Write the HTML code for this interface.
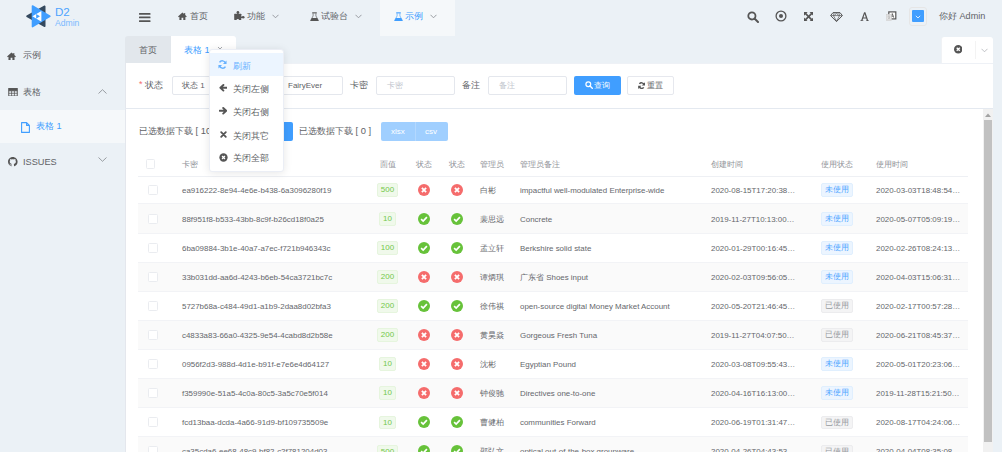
<!DOCTYPE html>
<html><head><meta charset="utf-8">
<style>
*{margin:0;padding:0;box-sizing:border-box;}
html,body{width:1002px;height:452px;overflow:hidden;background:#ebf1f6;font-family:"Liberation Sans",sans-serif;color:#606266;}
.a{position:absolute;}
.t{position:absolute;white-space:nowrap;line-height:1;}
svg{position:absolute;display:block;}
.sn{font-size:9.2px;color:#606266;}
.fl{font-size:9.2px;color:#606266;}
.inp{height:18.5px;border:1px solid #e4e7ed;border-radius:2px;background:#fff;}
.th{font-size:8px;color:#909399;line-height:26px;height:26px;white-space:nowrap;}
.td{font-size:7.93px;color:#65676c;line-height:29px;height:29px;white-space:nowrap;}
.cb{width:9.5px;height:9.5px;border:1px solid #eaecf0;border-radius:1.5px;background:#fff;}
.tag{height:13.5px;line-height:11.5px;font-size:8px;border:1px solid;border-radius:2px;text-align:center;white-space:nowrap;}
.tg{color:#73c84a;background:#f0f9eb;border-color:#e6f5de;}
.tp{width:32px;color:#4da4ff;background:#ecf5ff;border-color:#e0effe;}
.ti{width:32px;color:#96999e;background:#f4f4f5;border-color:#ececee;}
.dm{font-size:9.4px;color:#606266;}
.hn{font-size:9.3px;color:#606266;}
</style></head><body>
<div id="root" class="a" style="left:0;top:0;width:1002px;height:452px;">

<!-- LOGO -->
<svg style="left:22px;top:2px;" width="32" height="30" viewBox="0 0 32 30">
  <polygon points="5,14.3 22.7,4.3 22.7,24.3" fill="#34495e" stroke="#34495e" stroke-width="1.6" stroke-linejoin="round"/>
  <polygon points="10.5,4 27.8,14.3 10.5,24.6" fill="#409eff" stroke="#409eff" stroke-width="1.6" stroke-linejoin="round"/>
  <polygon points="10.4,14.3 19.4,8.9 19.4,19.7" fill="#fff"/>
  <polygon points="14.2,11.9 18,14.3 14.2,16.7" fill="#409eff"/>
</svg>
<div class="t" style="left:55px;top:6.3px;font-size:11.6px;color:#4da4ff;">D2</div>
<div class="t" style="left:55px;top:18.8px;font-size:8.6px;color:#7ab9ff;">Admin</div>

<!-- HEADER LEFT -->
<svg style="left:139.2px;top:13px;" width="11.5" height="9" viewBox="0 0 11.5 9"><rect x="0" y="0" width="11.5" height="1.7" rx="0.5" fill="#555"/><rect x="0" y="3.6" width="11.5" height="1.7" rx="0.5" fill="#555"/><rect x="0" y="7.2" width="11.5" height="1.7" rx="0.5" fill="#555"/></svg>

<!-- home icon -->
<svg style="left:178px;top:12.2px;" width="8.8" height="8" viewBox="0 0 10 9"><path d="M5 0.5 L0 5 L1 5.8 L1.6 5.3 V9 H4 V6.5 H6 V9 H8.4 V5.3 L9 5.8 L10 5 L8.2 3.4 V1 H7 V2.3 Z" fill="#555"/></svg>
<div class="t hn" style="left:189.5px;top:12px;">首页</div>

<!-- puzzle icon -->
<svg style="left:233px;top:10px;" width="13" height="11" viewBox="0 0 13 11"><rect x="1.2" y="3.8" width="7.1" height="6.2" rx="0.4" fill="#555"/><circle cx="4.9" cy="2.3" r="1.3" fill="#555"/><rect x="4.2" y="2.4" width="1.4" height="1.6" fill="#555"/><circle cx="10.2" cy="7.3" r="1.3" fill="#555"/><rect x="8" y="6.6" width="1.6" height="1.4" fill="#555"/><circle cx="4.8" cy="10.3" r="1.3" fill="#ebf1f6"/></svg>
<div class="t hn" style="left:246.7px;top:12px;">功能</div>
<svg style="left:272px;top:14px;" width="7" height="5" viewBox="0 0 7 5"><path d="M0.5 0.8 L3.5 3.8 L6.5 0.8" stroke="#909399" stroke-width="0.9" fill="none"/></svg>

<!-- flask -->
<svg style="left:310px;top:11.8px;" width="9" height="9.5" viewBox="0 0 9 9.5"><path d="M2.2 0.3h4.6v1.1H2.2z" fill="#555"/><path d="M3.1 1.3V3.9L0.7 8.6 M5.9 1.3V3.9L8.3 8.6" stroke="#555" stroke-width="0.65" fill="none"/><path d="M1.8 6.1H7.2L8.6 8.6Q8.8 9.3 8.1 9.3H0.9Q0.2 9.3 0.4 8.6z" fill="#555"/></svg>
<div class="t hn" style="left:321px;top:12px;">试验台</div>
<svg style="left:355px;top:14px;" width="7" height="5" viewBox="0 0 7 5"><path d="M0.5 0.8 L3.5 3.8 L6.5 0.8" stroke="#909399" stroke-width="0.9" fill="none"/></svg>

<div class="a" style="left:380px;top:0;width:75px;height:36px;background:#f5f8fa;"></div>
<svg style="left:394px;top:11.8px;" width="9" height="9.5" viewBox="0 0 9 9.5"><path d="M2.2 0.3h4.6v1.1H2.2z" fill="#409eff"/><path d="M3.1 1.3V3.9L0.7 8.6 M5.9 1.3V3.9L8.3 8.6" stroke="#409eff" stroke-width="0.65" fill="none"/><path d="M1.8 6.1H7.2L8.6 8.6Q8.8 9.3 8.1 9.3H0.9Q0.2 9.3 0.4 8.6z" fill="#409eff"/></svg>
<div class="t hn" style="left:404.5px;top:12px;color:#409eff;">示例</div>
<svg style="left:430px;top:14px;" width="7" height="5" viewBox="0 0 7 5"><path d="M0.5 0.8 L3.5 3.8 L6.5 0.8" stroke="#909399" stroke-width="0.9" fill="none"/></svg>

<!-- HEADER RIGHT -->
<svg style="left:747px;top:11px;" width="12" height="12" viewBox="0 0 12 12"><circle cx="4.9" cy="4.9" r="3.6" stroke="#555" stroke-width="1.8" fill="none"/><path d="M7.5 7.5 L11 11" stroke="#555" stroke-width="2" stroke-linecap="round"/></svg>
<svg style="left:775px;top:10px;" width="12" height="12" viewBox="0 0 12 12"><circle cx="6" cy="6" r="4.9" stroke="#555" stroke-width="1.3" fill="none"/><circle cx="6" cy="6" r="2" fill="#555"/></svg>
<svg style="left:804.2px;top:12px;" width="9.2" height="9.2" viewBox="0 0 10 10"><path d="M0 0h4L0 4z M10 0v4L6 0z M0 10v-4L4 10z M10 10h-4L10 6z" fill="#555"/><path d="M1.5 1.5L8.5 8.5 M8.5 1.5L1.5 8.5" stroke="#555" stroke-width="1.8"/></svg>
<svg style="left:830px;top:11.8px;" width="13" height="10" viewBox="0 0 13 10"><path d="M3 0.6h7l2.4 3L6.5 9.6L0.6 3.6z" stroke="#555" stroke-width="1" fill="none" stroke-linejoin="round"/><path d="M0.8 3.6h11.4 M4.2 0.8L3.4 3.6L6.5 9.2L9.6 3.6L8.8 0.8 M6.5 0.8L4.5 3.6 M6.5 0.8L8.5 3.6" stroke="#555" stroke-width="0.7" fill="none"/></svg>
<svg style="left:860px;top:11.8px;" width="9.4" height="9.6" viewBox="0 0 9.4 9.6"><path d="M4.1 0.3h1.3L8.2 8.4h1v1H6v-1h0.8L6.2 6.6H3.1L2.5 8.4h0.9v1H0.2v-1h0.9z M3.5 5.4h2.3L4.65 1.9z" fill="#555" fill-rule="evenodd"/></svg>
<svg style="left:886px;top:11px;" width="11" height="11" viewBox="0 0 11 11"><rect x="2.8" y="0.9" width="7" height="7" fill="#fff" stroke="#555" stroke-width="1.2"/><path d="M4.9 6.6L6.3 2.6L7.7 6.6M5.4 5.2H7.2" stroke="#555" stroke-width="0.9" fill="none"/><rect x="0.4" y="3.4" width="5" height="6.2" fill="#e6e6e6" stroke="#cfcfcf" stroke-width="0.6"/><path d="M1.6 5.2h2.6M2.9 4.6v0.6M1.8 8.6L4 6M2 6.2L4.2 8.6" stroke="#aaa" stroke-width="0.6" fill="none"/></svg>
<div class="a" style="left:909px;top:7px;width:18px;height:19px;border:1px solid #e6e6e6;border-radius:3px;"></div>
<div class="a" style="left:912px;top:10px;width:11.5px;height:12px;background:#409eff;border-radius:1px;"></div>
<svg style="left:915px;top:14.5px;" width="6" height="4" viewBox="0 0 6 4"><path d="M0.8 0.8L3 3L5.2 0.8" stroke="#fff" stroke-width="0.8" fill="none"/></svg>
<div class="t hn" style="left:939px;top:12.3px;font-size:9.1px;">你好 Admin</div>

<!-- SIDEBAR -->
<svg style="left:7px;top:52px;" width="9" height="8" viewBox="0 0 10 9"><path d="M5 0.5 L0 5 L1 5.8 L1.6 5.3 V9 H4 V6.5 H6 V9 H8.4 V5.3 L9 5.8 L10 5 L8.2 3.4 V1 H7 V2.3 Z" fill="#555"/></svg>
<div class="t sn" style="left:23px;top:51px;">示例</div>
<svg style="left:8px;top:87.6px;" width="10" height="8.5" viewBox="0 0 10 9"><rect x="0.5" y="0.5" width="9" height="8" fill="none" stroke="#555" stroke-width="1"/><path d="M0.5 3h9 M0.5 5.6h9 M3.5 3v5.5 M6.5 3v5.5" stroke="#555" stroke-width="0.8"/><rect x="0.5" y="0.5" width="9" height="2.5" fill="#555"/></svg>
<div class="t sn" style="left:23px;top:87.5px;">表格</div>
<svg style="left:98px;top:89px;" width="9" height="5" viewBox="0 0 9 5"><path d="M0.5 4.5 L4.5 0.7 L8.5 4.5" stroke="#909399" stroke-width="0.9" fill="none"/></svg>
<div class="a" style="left:0;top:109.6px;width:125px;height:33.6px;background:#f5f8fa;"></div>
<svg style="left:21px;top:121.5px;" width="9" height="11" viewBox="0 0 9 11"><path d="M0.6 0.6h5l2.8 2.8v7H0.6z M5.6 0.6v2.8h2.8" stroke="#409eff" stroke-width="1.1" fill="none" stroke-linejoin="round"/></svg>
<div class="t sn" style="left:36px;top:122px;color:#409eff;">表格 1</div>
<svg style="left:8px;top:157.3px;" width="9.6" height="9.6" viewBox="0 0 16 16"><path fill="#555" d="M8 0C3.58 0 0 3.58 0 8c0 3.54 2.29 6.53 5.47 7.59.4.07.55-.17.55-.38 0-.19-.01-.82-.01-1.49-2.01.37-2.53-.49-2.69-.94-.09-.23-.48-.94-.82-1.13-.28-.15-.68-.52-.01-.53.63-.01 1.08.58 1.23.82.72 1.21 1.87.87 2.33.66.07-.52.28-.87.51-1.07-1.78-.2-3.64-.89-3.64-3.95 0-.87.31-1.59.82-2.15-.08-.2-.36-1.02.08-2.12 0 0 .67-.21 2.2.82.64-.18 1.32-.27 2-.27.68 0 1.36.09 2 .27 1.53-1.04 2.2-.82 2.2-.82.44 1.1.16 1.92.08 2.12.51.56.82 1.27.82 2.15 0 3.07-1.87 3.75-3.65 3.95.29.25.54.73.54 1.48 0 1.07-.01 1.93-.01 2.2 0 .21.15.46.55.38A8.013 8.013 0 0016 8c0-4.42-3.58-8-8-8z"/></svg>
<div class="t sn" style="left:23px;top:158px;">ISSUES</div>
<svg style="left:98px;top:157px;" width="9" height="5" viewBox="0 0 9 5"><path d="M0.5 0.5 L4.5 4.3 L8.5 0.5" stroke="#909399" stroke-width="0.9" fill="none"/></svg>

<!-- TABS -->
<div class="a" style="left:125px;top:36px;width:111px;height:27px;border-radius:3px 3px 0 0;overflow:hidden;">
  <div class="a" style="left:0;top:0;width:46px;height:27px;background:#e2e7ec;"></div>
  <div class="a" style="left:46px;top:0;width:65px;height:27px;background:#fff;"></div>
</div>
<div class="t" style="left:139px;top:45px;font-size:9.4px;color:#606266;">首页</div>
<div class="t" style="left:184px;top:45px;font-size:9.4px;color:#409eff;">表格 1</div>
<svg style="left:217px;top:45.5px;" width="6" height="6" viewBox="0 0 6 6"><path d="M1 1L5 5M5 1L1 5" stroke="#909399" stroke-width="0.8"/></svg>

<div class="a" style="left:941px;top:37px;width:52px;height:26px;background:#fff;border-radius:3px 3px 0 0;border-left:1px solid #f0f2f5;"></div>
<svg style="left:953.5px;top:45.2px;" width="8.5" height="8.5" viewBox="0 0 10 10"><circle cx="5" cy="5" r="5" fill="#555"/><path d="M3.2 3.2L6.8 6.8M6.8 3.2L3.2 6.8" stroke="#fff" stroke-width="1.6"/></svg>
<div class="a" style="left:975px;top:41px;width:1px;height:18px;background:#f3f3f3;"></div>
<svg style="left:981px;top:48px;" width="7" height="5" viewBox="0 0 7 5"><path d="M0.5 0.8 L3.5 3.8 L6.5 0.8" stroke="#b0b3b8" stroke-width="0.8" fill="none"/></svg>

<!-- CARD -->
<div class="a" style="left:125px;top:63px;width:868px;height:389px;background:#fff;border-left:1px solid #e4e7ed;"></div>
<div class="a" style="left:125px;top:108px;width:868px;height:1px;background:#e4e9f0;"></div>
<div class="a" style="left:236px;top:62.5px;width:757px;height:1px;background:#eef1f6;"></div>

<!-- FORM -->
<div class="t" style="left:139px;top:80px;font-size:9px;color:#f56c6c;">*</div>
<div class="t fl" style="left:145px;top:81px;">状态</div>
<div class="a inp" style="left:172px;top:76px;width:72px;"></div>
<div class="t" style="left:182px;top:82px;font-size:8px;color:#606266;">状态 1</div>
<div class="t fl" style="left:249px;top:81px;">用户</div>
<div class="a inp" style="left:275px;top:76px;width:67.5px;"></div>
<div class="t" style="left:288px;top:82px;font-size:8px;color:#606266;">FairyEver</div>
<div class="t fl" style="left:350px;top:81px;">卡密</div>
<div class="a inp" style="left:376px;top:76px;width:79px;"></div>
<div class="t" style="left:387px;top:82px;font-size:8px;color:#c0c4cc;">卡密</div>
<div class="t fl" style="left:462px;top:81px;">备注</div>
<div class="a inp" style="left:488px;top:76px;width:79px;"></div>
<div class="t" style="left:499px;top:82px;font-size:8px;color:#c0c4cc;">备注</div>
<div class="a" style="left:574px;top:76px;width:47px;height:18.5px;background:#409eff;border-radius:2px;"></div>
<svg style="left:585px;top:81px;" width="8" height="8" viewBox="0 0 8 8"><circle cx="3.3" cy="3.3" r="2.4" stroke="#fff" stroke-width="1.2" fill="none"/><path d="M5 5L7.3 7.3" stroke="#fff" stroke-width="1.4" stroke-linecap="round"/></svg>
<div class="t" style="left:594px;top:81.5px;font-size:8px;color:#fff;">查询</div>
<div class="a" style="left:627px;top:76px;width:47px;height:18.5px;background:#fff;border:1px solid #e6e8ee;border-radius:2px;"></div>
<svg style="left:637.8px;top:81.8px;" width="7.2" height="7.2" viewBox="0 0 8 8"><path d="M6.7 2.9A2.9 2.9 0 0 0 1.6 2.1 M1.3 5.1A2.9 2.9 0 0 0 6.4 5.9" stroke="#555" stroke-width="1.6" fill="none"/><path d="M7.8 0.3V3.9H4.2z M0.2 7.7V4.1H3.8z" fill="#555"/></svg>
<div class="t" style="left:647px;top:81.5px;font-size:8px;color:#606266;">重置</div>

<!-- TOOLBAR -->
<div class="t" style="left:139px;top:127.3px;font-size:9.35px;color:#606266;">已选数据下载 [ 10 ]</div>
<div class="a" style="left:226px;top:122px;width:67px;height:18.5px;background:#409eff;border-radius:2px;"></div>
<div class="t" style="left:299px;top:127.3px;font-size:9.35px;color:#606266;">已选数据下载 [ 0 ]</div>
<div class="a" style="left:381px;top:122px;width:67px;height:18.5px;background:#a0cfff;border-radius:2px;"></div>
<div class="a" style="left:414.5px;top:122px;width:1px;height:18.5px;background:#b3d8ff;"></div>
<div class="t" style="left:391px;top:128px;font-size:8px;color:#fff;">xlsx</div>
<div class="t" style="left:425px;top:128px;font-size:8px;color:#fff;">csv</div>

<!-- TABLE -->
<div class="a cb" style="left:145.5px;top:159px;"></div>
<div class="a th" style="left:182px;top:151.5px;">卡密</div>
<div class="a th" style="left:379.5px;top:151.5px;">面值</div>
<div class="a th" style="left:416px;top:151.5px;">状态</div>
<div class="a th" style="left:449px;top:151.5px;">状态</div>
<div class="a th" style="left:480px;top:151.5px;">管理员</div>
<div class="a th" style="left:520px;top:151.5px;">管理员备注</div>
<div class="a th" style="left:711px;top:151.5px;">创建时间</div>
<div class="a th" style="left:821px;top:151.5px;">使用状态</div>
<div class="a th" style="left:876px;top:151.5px;">使用时间</div>
<div class="a" style="left:138px;top:176px;width:830px;height:1px;background:#eef0f4;"></div>
<div class="a" style="left:138px;top:177px;width:830px;height:27px;background:#fff;border-bottom:1px solid #f2f3f6;"></div>
<div class="a cb" style="left:148px;top:185.2px;"></div>
<div class="a td" style="left:182px;top:175.60px;">ea916222-8e94-4e6e-b438-6a3096280f19</div>
<div class="a tag tg" style="left:376.75px;top:183.35px;width:21.5px;">500</div>
<svg style="left:418px;top:184.10px;" width="12" height="12" viewBox="0 0 12 12"><circle cx="6" cy="6" r="6" fill="#f56c6c"/><path d="M3.9 3.9L8.1 8.1M8.1 3.9L3.9 8.1" stroke="#fff" stroke-width="1.8"/></svg>
<svg style="left:451px;top:184.10px;" width="12" height="12" viewBox="0 0 12 12"><circle cx="6" cy="6" r="6" fill="#f56c6c"/><path d="M3.9 3.9L8.1 8.1M8.1 3.9L3.9 8.1" stroke="#fff" stroke-width="1.8"/></svg>
<div class="a td" style="left:480px;top:175.60px;">白彬</div>
<div class="a td" style="left:520px;top:175.60px;">impactful well-modulated Enterprise-wide</div>
<div class="a td" style="left:711px;top:175.60px;">2020-08-15T17:20:38…</div>
<div class="a tag tp" style="left:821px;top:183.35px;">未使用</div>
<div class="a td" style="left:876px;top:175.60px;">2020-03-03T18:48:54…</div>
<div class="a" style="left:138px;top:204px;width:830px;height:30px;background:#fafafa;border-bottom:1px solid #f2f3f6;"></div>
<div class="a cb" style="left:148px;top:214.2px;"></div>
<div class="a td" style="left:182px;top:204.62px;">88f951f8-b533-43bb-8c9f-b26cd18f0a25</div>
<div class="a tag tg" style="left:379.0px;top:212.37px;width:17px;">10</div>
<svg style="left:418px;top:213.12px;" width="12" height="12" viewBox="0 0 12 12"><circle cx="6" cy="6" r="6" fill="#67c23a"/><path d="M3.1 6.1L5.2 8.1L8.9 4.2" stroke="#fff" stroke-width="1.7" fill="none"/></svg>
<svg style="left:451px;top:213.12px;" width="12" height="12" viewBox="0 0 12 12"><circle cx="6" cy="6" r="6" fill="#67c23a"/><path d="M3.1 6.1L5.2 8.1L8.9 4.2" stroke="#fff" stroke-width="1.7" fill="none"/></svg>
<div class="a td" style="left:480px;top:204.62px;">裴思远</div>
<div class="a td" style="left:520px;top:204.62px;">Concrete</div>
<div class="a td" style="left:711px;top:204.62px;">2019-11-27T10:13:00…</div>
<div class="a tag tp" style="left:821px;top:212.37px;">未使用</div>
<div class="a td" style="left:876px;top:204.62px;">2020-05-07T05:09:19…</div>
<div class="a" style="left:138px;top:234px;width:830px;height:29px;background:#fff;border-bottom:1px solid #f2f3f6;"></div>
<div class="a cb" style="left:148px;top:243.2px;"></div>
<div class="a td" style="left:182px;top:233.64px;">6ba09884-3b1e-40a7-a7ec-f721b946343c</div>
<div class="a tag tg" style="left:376.75px;top:241.39px;width:21.5px;">100</div>
<svg style="left:418px;top:242.14px;" width="12" height="12" viewBox="0 0 12 12"><circle cx="6" cy="6" r="6" fill="#67c23a"/><path d="M3.1 6.1L5.2 8.1L8.9 4.2" stroke="#fff" stroke-width="1.7" fill="none"/></svg>
<svg style="left:451px;top:242.14px;" width="12" height="12" viewBox="0 0 12 12"><circle cx="6" cy="6" r="6" fill="#67c23a"/><path d="M3.1 6.1L5.2 8.1L8.9 4.2" stroke="#fff" stroke-width="1.7" fill="none"/></svg>
<div class="a td" style="left:480px;top:233.64px;">孟立轩</div>
<div class="a td" style="left:520px;top:233.64px;">Berkshire solid state</div>
<div class="a td" style="left:711px;top:233.64px;">2020-01-29T00:16:45…</div>
<div class="a tag tp" style="left:821px;top:241.39px;">未使用</div>
<div class="a td" style="left:876px;top:233.64px;">2020-02-26T08:24:13…</div>
<div class="a" style="left:138px;top:263px;width:830px;height:29px;background:#fafafa;border-bottom:1px solid #f2f3f6;"></div>
<div class="a cb" style="left:148px;top:272.3px;"></div>
<div class="a td" style="left:182px;top:262.66px;">33b031dd-aa6d-4243-b6eb-54ca3721bc7c</div>
<div class="a tag tg" style="left:376.75px;top:270.41px;width:21.5px;">200</div>
<svg style="left:418px;top:271.16px;" width="12" height="12" viewBox="0 0 12 12"><circle cx="6" cy="6" r="6" fill="#f56c6c"/><path d="M3.9 3.9L8.1 8.1M8.1 3.9L3.9 8.1" stroke="#fff" stroke-width="1.8"/></svg>
<svg style="left:451px;top:271.16px;" width="12" height="12" viewBox="0 0 12 12"><circle cx="6" cy="6" r="6" fill="#f56c6c"/><path d="M3.9 3.9L8.1 8.1M8.1 3.9L3.9 8.1" stroke="#fff" stroke-width="1.8"/></svg>
<div class="a td" style="left:480px;top:262.66px;">谭炳琪</div>
<div class="a td" style="left:520px;top:262.66px;">广东省 Shoes input</div>
<div class="a td" style="left:711px;top:262.66px;">2020-02-03T09:56:05…</div>
<div class="a tag tp" style="left:821px;top:270.41px;">未使用</div>
<div class="a td" style="left:876px;top:262.66px;">2020-04-03T15:06:31…</div>
<div class="a" style="left:138px;top:292px;width:830px;height:29px;background:#fff;border-bottom:1px solid #f2f3f6;"></div>
<div class="a cb" style="left:148px;top:301.3px;"></div>
<div class="a td" style="left:182px;top:291.68px;">5727b68a-c484-49d1-a1b9-2daa8d02bfa3</div>
<div class="a tag tg" style="left:376.75px;top:299.43px;width:21.5px;">200</div>
<svg style="left:418px;top:300.18px;" width="12" height="12" viewBox="0 0 12 12"><circle cx="6" cy="6" r="6" fill="#67c23a"/><path d="M3.1 6.1L5.2 8.1L8.9 4.2" stroke="#fff" stroke-width="1.7" fill="none"/></svg>
<svg style="left:451px;top:300.18px;" width="12" height="12" viewBox="0 0 12 12"><circle cx="6" cy="6" r="6" fill="#67c23a"/><path d="M3.1 6.1L5.2 8.1L8.9 4.2" stroke="#fff" stroke-width="1.7" fill="none"/></svg>
<div class="a td" style="left:480px;top:291.68px;">徐伟祺</div>
<div class="a td" style="left:520px;top:291.68px;">open-source digital Money Market Account</div>
<div class="a td" style="left:711px;top:291.68px;">2020-05-20T21:46:45…</div>
<div class="a tag ti" style="left:821px;top:299.43px;">已使用</div>
<div class="a td" style="left:876px;top:291.68px;">2020-02-17T00:57:28…</div>
<div class="a" style="left:138px;top:321px;width:830px;height:29px;background:#fafafa;border-bottom:1px solid #f2f3f6;"></div>
<div class="a cb" style="left:148px;top:330.3px;"></div>
<div class="a td" style="left:182px;top:320.70px;">c4833a83-66a0-4325-9e54-4cabd8d2b58e</div>
<div class="a tag tg" style="left:376.75px;top:328.45px;width:21.5px;">200</div>
<svg style="left:418px;top:329.20px;" width="12" height="12" viewBox="0 0 12 12"><circle cx="6" cy="6" r="6" fill="#f56c6c"/><path d="M3.9 3.9L8.1 8.1M8.1 3.9L3.9 8.1" stroke="#fff" stroke-width="1.8"/></svg>
<svg style="left:451px;top:329.20px;" width="12" height="12" viewBox="0 0 12 12"><circle cx="6" cy="6" r="6" fill="#f56c6c"/><path d="M3.9 3.9L8.1 8.1M8.1 3.9L3.9 8.1" stroke="#fff" stroke-width="1.8"/></svg>
<div class="a td" style="left:480px;top:320.70px;">黄昊焱</div>
<div class="a td" style="left:520px;top:320.70px;">Gorgeous Fresh Tuna</div>
<div class="a td" style="left:711px;top:320.70px;">2019-11-27T04:07:50…</div>
<div class="a tag ti" style="left:821px;top:328.45px;">已使用</div>
<div class="a td" style="left:876px;top:320.70px;">2020-06-21T08:45:37…</div>
<div class="a" style="left:138px;top:350px;width:830px;height:29px;background:#fff;border-bottom:1px solid #f2f3f6;"></div>
<div class="a cb" style="left:148px;top:359.3px;"></div>
<div class="a td" style="left:182px;top:349.72px;">0956f2d3-988d-4d1e-b91f-e7e6e4d64127</div>
<div class="a tag tg" style="left:379.0px;top:357.47px;width:17px;">10</div>
<svg style="left:418px;top:358.22px;" width="12" height="12" viewBox="0 0 12 12"><circle cx="6" cy="6" r="6" fill="#f56c6c"/><path d="M3.9 3.9L8.1 8.1M8.1 3.9L3.9 8.1" stroke="#fff" stroke-width="1.8"/></svg>
<svg style="left:451px;top:358.22px;" width="12" height="12" viewBox="0 0 12 12"><circle cx="6" cy="6" r="6" fill="#f56c6c"/><path d="M3.9 3.9L8.1 8.1M8.1 3.9L3.9 8.1" stroke="#fff" stroke-width="1.8"/></svg>
<div class="a td" style="left:480px;top:349.72px;">沈彬</div>
<div class="a td" style="left:520px;top:349.72px;">Egyptian Pound</div>
<div class="a td" style="left:711px;top:349.72px;">2020-03-08T09:55:43…</div>
<div class="a tag tp" style="left:821px;top:357.47px;">未使用</div>
<div class="a td" style="left:876px;top:349.72px;">2020-05-01T20:23:06…</div>
<div class="a" style="left:138px;top:379px;width:830px;height:29px;background:#fafafa;border-bottom:1px solid #f2f3f6;"></div>
<div class="a cb" style="left:148px;top:388.3px;"></div>
<div class="a td" style="left:182px;top:378.74px;">f359990e-51a5-4c0a-80c5-3a5c70e5f014</div>
<div class="a tag tg" style="left:379.0px;top:386.49px;width:17px;">10</div>
<svg style="left:418px;top:387.24px;" width="12" height="12" viewBox="0 0 12 12"><circle cx="6" cy="6" r="6" fill="#f56c6c"/><path d="M3.9 3.9L8.1 8.1M8.1 3.9L3.9 8.1" stroke="#fff" stroke-width="1.8"/></svg>
<svg style="left:451px;top:387.24px;" width="12" height="12" viewBox="0 0 12 12"><circle cx="6" cy="6" r="6" fill="#f56c6c"/><path d="M3.9 3.9L8.1 8.1M8.1 3.9L3.9 8.1" stroke="#fff" stroke-width="1.8"/></svg>
<div class="a td" style="left:480px;top:378.74px;">钟俊驰</div>
<div class="a td" style="left:520px;top:378.74px;">Directives one-to-one</div>
<div class="a td" style="left:711px;top:378.74px;">2020-04-16T16:13:00…</div>
<div class="a tag tp" style="left:821px;top:386.49px;">未使用</div>
<div class="a td" style="left:876px;top:378.74px;">2019-11-28T15:21:50…</div>
<div class="a" style="left:138px;top:408px;width:830px;height:29px;background:#fff;border-bottom:1px solid #f2f3f6;"></div>
<div class="a cb" style="left:148px;top:417.4px;"></div>
<div class="a td" style="left:182px;top:407.76px;">fcd13baa-dcda-4a66-91d9-bf109735509e</div>
<div class="a tag tg" style="left:379.0px;top:415.51px;width:17px;">10</div>
<svg style="left:418px;top:416.26px;" width="12" height="12" viewBox="0 0 12 12"><circle cx="6" cy="6" r="6" fill="#67c23a"/><path d="M3.1 6.1L5.2 8.1L8.9 4.2" stroke="#fff" stroke-width="1.7" fill="none"/></svg>
<svg style="left:451px;top:416.26px;" width="12" height="12" viewBox="0 0 12 12"><circle cx="6" cy="6" r="6" fill="#67c23a"/><path d="M3.1 6.1L5.2 8.1L8.9 4.2" stroke="#fff" stroke-width="1.7" fill="none"/></svg>
<div class="a td" style="left:480px;top:407.76px;">曹健柏</div>
<div class="a td" style="left:520px;top:407.76px;">communities Forward</div>
<div class="a td" style="left:711px;top:407.76px;">2020-06-19T01:31:47…</div>
<div class="a tag ti" style="left:821px;top:415.51px;">已使用</div>
<div class="a td" style="left:876px;top:407.76px;">2020-08-17T04:24:06…</div>
<div class="a" style="left:138px;top:437px;width:830px;height:29px;background:#fafafa;border-bottom:1px solid #f2f3f6;"></div>
<div class="a cb" style="left:148px;top:446.4px;"></div>
<div class="a td" style="left:182px;top:436.78px;">ca35cda6-ee68-48c9-bf82-c2f781204d03</div>
<div class="a tag tg" style="left:376.75px;top:444.53px;width:21.5px;">500</div>
<svg style="left:418px;top:445.28px;" width="12" height="12" viewBox="0 0 12 12"><circle cx="6" cy="6" r="6" fill="#67c23a"/><path d="M3.1 6.1L5.2 8.1L8.9 4.2" stroke="#fff" stroke-width="1.7" fill="none"/></svg>
<svg style="left:451px;top:445.28px;" width="12" height="12" viewBox="0 0 12 12"><circle cx="6" cy="6" r="6" fill="#67c23a"/><path d="M3.1 6.1L5.2 8.1L8.9 4.2" stroke="#fff" stroke-width="1.7" fill="none"/></svg>
<div class="a td" style="left:480px;top:436.78px;">邵弘文</div>
<div class="a td" style="left:520px;top:436.78px;">optical out-of-the-box groupware</div>
<div class="a td" style="left:711px;top:436.78px;">2020-04-26T04:43:53…</div>
<div class="a tag ti" style="left:821px;top:444.53px;">已使用</div>
<div class="a td" style="left:876px;top:436.78px;">2020-04-04T08:35:08…</div>
<!-- /TABLE -->

<!-- SCROLLBAR -->
<div class="a" style="left:983px;top:109px;width:10px;height:343px;background:#f1f1f1;"></div>
<svg style="left:985px;top:113px;" width="6" height="4" viewBox="0 0 6 4"><path d="M0 4L3 0.5L6 4z" fill="#a3a3a3"/></svg>
<div class="a" style="left:984px;top:119.5px;width:8px;height:322px;background:#c1c1c1;"></div>

<!-- DROPDOWN -->
<div class="a" style="left:209px;top:49.3px;width:75px;height:123.2px;background:#fff;border:1px solid #ebeef5;border-radius:3px;box-shadow:0 1px 8px rgba(0,0,0,0.1);"></div>
<div class="a" style="left:210px;top:53.3px;width:73px;height:22.6px;background:#ecf5ff;"></div>
<svg style="left:218.3px;top:60.3px;" width="9" height="9" viewBox="0 0 8 8"><path d="M6.6 3A2.8 2.8 0 0 0 1.4 2.2 M1.4 5A2.8 2.8 0 0 0 6.6 5.8" stroke="#66b1ff" stroke-width="1.3" fill="none"/><path d="M7.6 0.4V3.6H4.4z M0.4 7.6V4.4H3.6z" fill="#66b1ff"/></svg>
<div class="t dm" style="left:233px;top:61px;color:#66b1ff;">刷新</div>
<svg style="left:218.6px;top:84px;" width="8.6" height="7.6" viewBox="0 0 8.6 7.6"><path d="M8 3.8H1.8 M4.4 1L1.4 3.8L4.4 6.6" stroke="#555" stroke-width="1.9" fill="none" stroke-linejoin="round" stroke-linecap="round"/></svg>
<div class="t dm" style="left:233px;top:84.2px;">关闭左侧</div>
<svg style="left:218.6px;top:107.2px;" width="8.6" height="7.6" viewBox="0 0 8.6 7.6"><path d="M0.6 3.8H6.8 M4.2 1L7.2 3.8L4.2 6.6" stroke="#555" stroke-width="1.9" fill="none" stroke-linejoin="round" stroke-linecap="round"/></svg>
<div class="t dm" style="left:233px;top:107.4px;">关闭右侧</div>
<svg style="left:219.5px;top:130.8px;" width="7" height="7" viewBox="0 0 7 7"><path d="M1.2 1.2L5.8 5.8M5.8 1.2L1.2 5.8" stroke="#555" stroke-width="1.8" stroke-linecap="round"/></svg>
<div class="t dm" style="left:233px;top:130.6px;">关闭其它</div>
<svg style="left:218.5px;top:153px;" width="9" height="9" viewBox="0 0 10 10"><circle cx="5" cy="5" r="4.6" fill="#555"/><path d="M3.4 3.4L6.6 6.6M6.6 3.4L3.4 6.6" stroke="#fff" stroke-width="1.4"/></svg>
<div class="t dm" style="left:233px;top:153.4px;">关闭全部</div>
</div>
</body></html>
